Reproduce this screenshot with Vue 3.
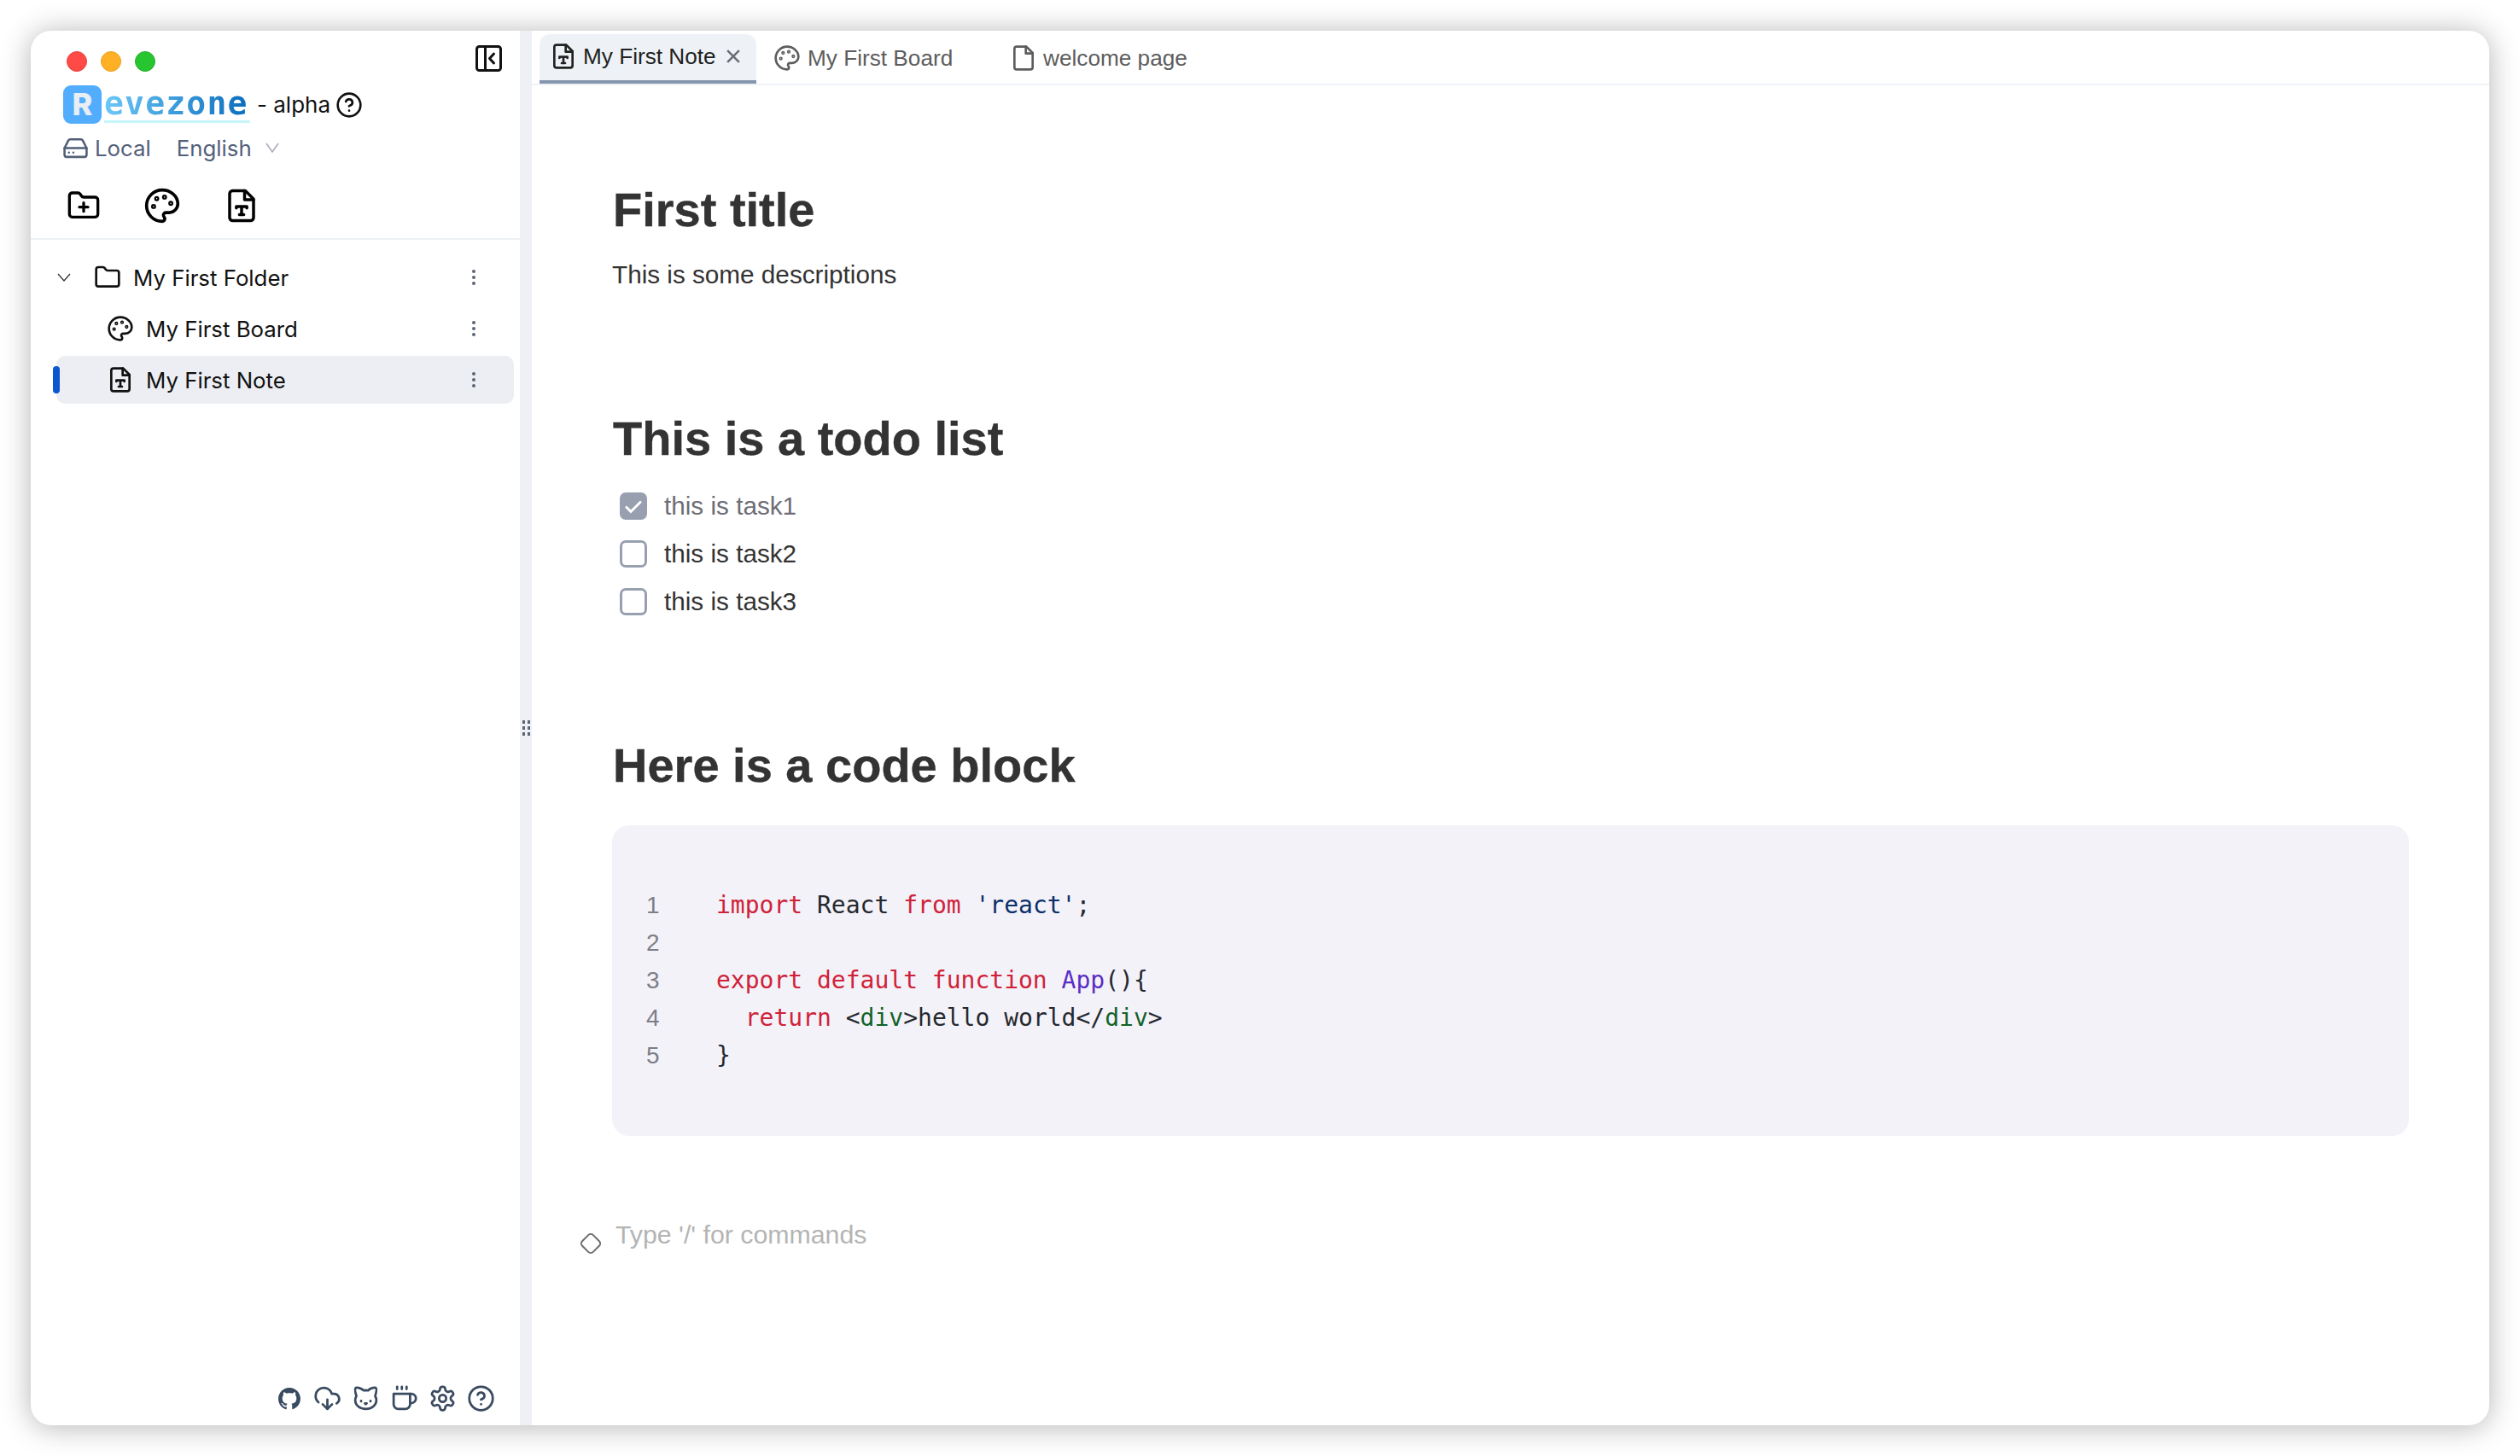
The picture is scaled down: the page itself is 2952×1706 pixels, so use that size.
<script setup>
const tree = [
  { label: 'My First Folder', icon: 'i-folder', kind: 'folder' },
  { label: 'My First Board', icon: 'i-palette', kind: 'item' },
  { label: 'My First Note', icon: 'i-note', kind: 'item active' }
]
const footer = ['i-cloud', 'i-cat', 'i-cup', 'i-gear', 'i-help']
const tasks = [
  { text: 'this is task1', done: true },
  { text: 'this is task2', done: false },
  { text: 'this is task3', done: false }
]
</script>

<template>
  <svg class="defs" aria-hidden="true">
    <defs>
      <symbol id="i-palette" viewBox="0 0 24 24"><circle cx="13.5" cy="6.5" r=".6"/><circle cx="17.5" cy="10.5" r=".6"/><circle cx="8.5" cy="7.5" r=".6"/><circle cx="6.5" cy="12.5" r=".6"/><path d="M12 2C6.5 2 2 6.5 2 12s4.5 10 10 10c.926 0 1.648-.746 1.648-1.688 0-.437-.18-.835-.437-1.125-.29-.289-.438-.652-.438-1.125a1.64 1.64 0 0 1 1.668-1.668h1.996c3.051 0 5.555-2.503 5.555-5.554C21.965 6.012 17.461 2 12 2z"/></symbol>
      <symbol id="i-note" viewBox="0 0 24 24"><path d="M14.5 2H6a2 2 0 0 0-2 2v16a2 2 0 0 0 2 2h12a2 2 0 0 0 2-2V7.5L14.5 2z"/><path d="M14 2v6h6"/><path d="M8.5 13.5v-1h7v1M12 12.5v5.5M10.5 18h3"/></symbol>
      <symbol id="i-file" viewBox="0 0 24 24"><path d="M14.5 2H6a2 2 0 0 0-2 2v16a2 2 0 0 0 2 2h12a2 2 0 0 0 2-2V7.5L14.5 2z"/><path d="M14 2v6h6"/></symbol>
      <symbol id="i-folder" viewBox="0 0 24 24"><path d="M4 20h16a2 2 0 0 0 2-2V8a2 2 0 0 0-2-2h-7.93a2 2 0 0 1-1.66-.9l-.82-1.2A2 2 0 0 0 7.93 3H4a2 2 0 0 0-2 2v13c0 1.1.9 2 2 2Z"/></symbol>
      <symbol id="i-folder-plus" viewBox="0 0 24 24"><path d="M4 20h16a2 2 0 0 0 2-2V8a2 2 0 0 0-2-2h-7.93a2 2 0 0 1-1.66-.9l-.82-1.2A2 2 0 0 0 7.93 3H4a2 2 0 0 0-2 2v13c0 1.1.9 2 2 2Z"/><path d="M12 10v6M9 13h6"/></symbol>
      <symbol id="i-help" viewBox="0 0 24 24"><circle cx="12" cy="12" r="10"/><path d="M9.09 9a3 3 0 0 1 5.83 1c0 2-3 3-3 3"/><path d="M12 17h.01"/></symbol>
      <symbol id="i-cloud" viewBox="0 0 24 24"><path d="M12 13v8l-4-4"/><path d="m12 21 4-4"/><path d="M4.393 15.269A7 7 0 1 1 15.71 8h1.79a4.5 4.5 0 0 1 2.436 8.284"/></symbol>
      <symbol id="i-cat" viewBox="0 0 24 24"><path d="M12 5c.67 0 1.35.09 2 .26 1.78-2 5.03-2.84 6.42-2.26 1.4.58-.42 7-.42 7 .57 1.07 1 2.24 1 3.44C21 17.9 16.97 21 12 21s-9-3-9-7.56c0-1.25.5-2.4 1-3.44 0 0-1.89-6.42-.5-7 1.39-.58 4.72.23 6.5 2.23A9.04 9.04 0 0 1 12 5Z"/><path d="M8 14v.5M16 14v.5M11.25 16.25h1.5L12 17l-.75-.75Z"/></symbol>
      <symbol id="i-cup" viewBox="0 0 24 24"><path d="M17 8h1a4 4 0 1 1 0 8h-1"/><path d="M3 8h14v9a4 4 0 0 1-4 4H7a4 4 0 0 1-4-4Z"/><path d="M6 2v2M10 2v2M14 2v2"/></symbol>
      <symbol id="i-gear" viewBox="0 0 24 24"><path d="M12.22 2h-.44a2 2 0 0 0-2 2v.18a2 2 0 0 1-1 1.73l-.43.25a2 2 0 0 1-2 0l-.15-.08a2 2 0 0 0-2.73.73l-.22.38a2 2 0 0 0 .73 2.73l.15.1a2 2 0 0 1 1 1.72v.51a2 2 0 0 1-1 1.74l-.15.09a2 2 0 0 0-.73 2.73l.22.38a2 2 0 0 0 2.73.73l.15-.08a2 2 0 0 1 2 0l.43.25a2 2 0 0 1 1 1.73V20a2 2 0 0 0 2 2h.44a2 2 0 0 0 2-2v-.18a2 2 0 0 1 1-1.73l.43-.25a2 2 0 0 1 2 0l.15.08a2 2 0 0 0 2.73-.73l.22-.39a2 2 0 0 0-.73-2.73l-.15-.08a2 2 0 0 1-1-1.74v-.5a2 2 0 0 1 1-1.74l.15-.09a2 2 0 0 0 .73-2.73l-.22-.38a2 2 0 0 0-2.73-.73l-.15.08a2 2 0 0 1-2 0l-.43-.25a2 2 0 0 1-1-1.73V4a2 2 0 0 0-2-2z"/><circle cx="12" cy="12" r="3"/></symbol>
      <symbol id="i-drive" viewBox="0 0 24 24"><path d="M22 12H2"/><path d="M5.45 5.11 2 12v6a2 2 0 0 0 2 2h16a2 2 0 0 0 2-2v-6l-3.45-6.89A2 2 0 0 0 16.76 4H7.24a2 2 0 0 0-1.79 1.11z"/><path d="M6 16h.01M10 16h.01"/></symbol>
      <symbol id="i-collapse" viewBox="0 0 31 31"><rect x="1.5" y="1.5" width="28" height="28" rx="3"/><path d="M11.5 1.5v28M21.5 10l-5 5.500 5 5.500"/></symbol>
    </defs>
  </svg>

  <div class="page">
    <div class="window">
      <aside class="sidebar">
        <div class="head">
          <div class="lights-row">
            <div class="lights">
              <span class="light red"></span>
              <span class="light amber"></span>
              <span class="light green"></span>
            </div>
            <svg class="ico collapse"><use href="#i-collapse" /></svg>
          </div>
          <div class="brand">
            <span class="brand-r">R</span>
            <span class="brand-word">evezone</span>
            <span class="brand-alpha">- alpha</span>
            <svg class="ico brand-help"><use href="#i-help" /></svg>
          </div>
          <div class="meta">
            <svg class="ico meta-drive"><use href="#i-drive" /></svg>
            <span class="meta-local">Local</span>
            <span class="meta-lang">English</span>
            <svg class="meta-chev" viewBox="0 0 16 12"><path d="M1 1l7 10 7-10" /></svg>
          </div>
          <div class="tools">
            <svg class="ico tool tool-folder"><use href="#i-folder-plus" /></svg>
            <svg class="ico tool tool-palette"><use href="#i-palette" /></svg>
            <svg class="ico tool tool-note"><use href="#i-note" /></svg>
          </div>
        </div>

        <nav class="tree">
          <div v-for="row in tree" :key="row.label" class="row" :class="row.kind">
            <span v-if="row.kind.includes('active')" class="marker"></span>
            <svg v-if="row.kind === 'folder'" class="row-chev" viewBox="0 0 16 10"><path d="M1 1l7 8 7-8" /></svg>
            <svg class="ico row-icon"><use :href="'#' + row.icon" /></svg>
            <span class="row-label">{{ row.label }}</span>
            <span class="row-more"><i></i><i></i><i></i></span>
          </div>
        </nav>

        <div class="foot">
          <svg class="foot-git" viewBox="0 0 16 16"><path d="M8 0C3.58 0 0 3.58 0 8c0 3.54 2.29 6.53 5.47 7.59.4.07.55-.17.55-.38 0-.19-.01-.82-.01-1.49-2.01.37-2.53-.49-2.69-.94-.09-.23-.48-.94-.82-1.13-.28-.15-.68-.52-.01-.53.63-.01 1.08.58 1.23.82.72 1.21 1.87.87 2.33.66.07-.52.28-.87.51-1.07-1.78-.2-3.64-.89-3.64-3.95 0-.87.31-1.59.82-2.15-.08-.2-.36-1.02.08-2.12 0 0 .67-.21 2.2.82.64-.18 1.32-.27 2-.27.68 0 1.36.09 2 .27 1.53-1.04 2.2-.82 2.2-.82.44 1.1.16 1.92.08 2.12.51.56.82 1.27.82 2.15 0 3.07-1.87 3.75-3.65 3.95.29.25.54.73.54 1.48 0 1.07-.01 1.93-.01 2.2 0 .21.15.46.55.38A8.013 8.013 0 0016 8c0-4.42-3.58-8-8-8z"/></svg>
          <svg v-for="f in footer" :key="f" class="ico foot-icon"><use :href="'#' + f" /></svg>
        </div>
      </aside>

      <div class="gutter">
        <span class="grip"><i></i><i></i><i></i><i></i><i></i><i></i></span>
      </div>

      <main class="main">
        <header class="tabs">
          <div class="tab tab-active">
            <svg class="ico tab-icon"><use href="#i-note" /></svg>
            <span>My First Note</span>
            <svg class="tab-x" viewBox="1 1 14 14"><path d="M2 2l12 12M14 2L2 14" /></svg>
          </div>
          <div class="tab tab-board">
            <svg class="ico tab-icon"><use href="#i-palette" /></svg>
            <span>My First Board</span>
          </div>
          <div class="tab tab-file">
            <svg class="ico tab-icon"><use href="#i-file" /></svg>
            <span>welcome page</span>
          </div>
        </header>

        <article class="doc">
          <h1 class="h-first">First title</h1>
          <p class="desc">This is some descriptions</p>

          <h1 class="h-todo">This is a todo list</h1>
          <ul class="tasks">
            <li v-for="t in tasks" :key="t.text" class="task" :class="{ done: t.done }">
              <span class="box">
                <svg v-if="t.done" viewBox="0 0 32 32"><path d="M7 16.500l6 6L25 10.500" /></svg>
              </span>
              <span>{{ t.text }}</span>
            </li>
          </ul>

          <h1 class="h-code">Here is a code block</h1>
          <div class="code">
            <div class="nums"><span>1</span><span>2</span><span>3</span><span>4</span><span>5</span></div>
            <div class="lines">
              <div><b class="kw">import</b> React <b class="kw">from</b> <b class="str">'react'</b>;</div>
              <div>&nbsp;</div>
              <div><b class="kw">export default function</b> <b class="fn">App</b>(){</div>
              <div>&nbsp;&nbsp;<b class="kw">return</b> &lt;<b class="tag">div</b>&gt;hello world&lt;/<b class="tag">div</b>&gt;</div>
              <div>}</div>
            </div>
          </div>

          <div class="placeholder">
            <span class="diamond"></span>
            <span>Type '/' for commands</span>
          </div>
        </article>
      </main>
    </div>
  </div>
</template>

<style>
html, body { margin: 0; background: #fff; overflow: hidden; }
</style>

<style scoped>
.defs { position: absolute; width: 0; height: 0; }
.page { width: 2952px; height: 1706px; padding: 36px; box-sizing: border-box; background: #fff; overflow: hidden; }
.window {
  display: flex; width: 2880px; height: 1634px; background: #fff; border-radius: 24px; overflow: hidden;
  box-shadow: 0 2px 34px rgba(0, 0, 0, .3);
  font-family: "Liberation Sans", Arial, sans-serif;
}
.ico { fill: none; stroke: currentColor; stroke-width: 2; stroke-linecap: round; stroke-linejoin: round; }

.sidebar { width: 573px; flex: none; display: flex; flex-direction: column; font-family: Inter, "Liberation Sans", sans-serif; color: #111; }
.head { border-bottom: 2px solid #eef1f5; height: 245px; box-sizing: border-box; padding-left: 38px; }
.lights-row { display: flex; justify-content: space-between; height: 64px; padding: 17px 21px 0 4px; box-sizing: border-box; }
.lights { display: flex; gap: 16px; padding-top: 7px; }
.light { width: 24px; height: 24px; border-radius: 50%; box-sizing: border-box; }
.red { background: #ff4a46; border: 1px solid #e8403c; }
.amber { background: #ffb024; border: 1px solid #e89e1e; }
.green { background: #27c52f; border: 1px solid #24b02b; }
.collapse { width: 31px; height: 31px; color: #111; stroke-width: 3; }
.brand { display: flex; align-items: center; height: 45px; }
.brand-r {
  width: 45px; height: 45px; border-radius: 9px; background: #52adff; color: #e9eef3;
  font: 800 36px/45px Inter, sans-serif; text-align: center;
}
.brand-word {
  margin-left: 3px; width: 171px; height: 42px; box-sizing: border-box; border-bottom: 3px solid #c6f6fb;
  font: 700 38px/38px "DejaVu Sans Mono", monospace; letter-spacing: 1.200px;
  background: linear-gradient(90deg, #6cc8f8, #0a6cbd); -webkit-background-clip: text; background-clip: text; color: transparent;
}
.brand-alpha { margin-left: 8px; font-size: 26px; color: #111; }
.brand-help { width: 32px; height: 32px; margin-left: 6px; }
.meta { display: flex; align-items: center; height: 36px; margin-top: 10px; font-size: 25.800px; color: #53607a; }
.meta-drive { width: 31px; height: 31px; margin-left: -1px; flex: none; }
.meta-local { margin-left: 7px; }
.meta-lang { margin-left: 30px; }
.meta-chev { width: 16px; height: 12px; margin-left: 16px; fill: none; stroke: #a6abb3; stroke-width: 1.500; }
.tools { display: flex; align-items: center; margin-top: 28px; color: #000; }
.tool { height: 44px; }
.tool-folder { width: 40px; margin-left: 4px; }
.tool-palette { width: 44px; margin-left: 50px; }
.tool-note { width: 42px; margin-left: 50px; }

.tree { display: flex; flex-direction: column; gap: 4px; padding: 16px 7px 0 30px; }
.row { position: relative; display: flex; align-items: center; height: 56px; font-size: 25.800px; border-radius: 10px; color: #111; }
.row.active { background: #eceef3; }
.marker { position: absolute; left: -4px; top: 12px; width: 8px; height: 32px; border-radius: 4px; background: #0b57d0; }
.row-chev { width: 16px; height: 10px; margin-left: 1px; fill: none; stroke: #333; stroke-width: 1.300; }
.row-icon { width: 32px; height: 32px; flex: none; }
.folder .row-icon { margin-left: 27px; }
.item .row-icon, .active .row-icon { margin-left: 59px; }
.row-label { margin-left: 14px; }
.row-more { display: flex; flex-direction: column; gap: 3px; margin-left: auto; margin-right: 45px; }
.row-more i { width: 4px; height: 4px; border-radius: 50%; background: #5c6577; }

.foot { margin-top: auto; display: flex; justify-content: flex-end; align-items: center; gap: 12px; padding: 0 29px 15px 0; color: #3a4a60; }
.foot-git { width: 26px; height: 26px; fill: #3a4a60; margin-right: 3px; }
.foot-icon { width: 33px; height: 33px; }

.gutter { width: 14px; flex: none; background: #eef0f5; display: flex; align-items: center; justify-content: center; }
.grip { display: grid; grid-template-columns: 3px 3px; gap: 3px; }
.grip i { width: 3px; height: 4px; background: #5b6575; }

.main { flex: 1; min-width: 0; display: flex; flex-direction: column; }
.tabs { display: flex; height: 64px; box-sizing: border-box; padding: 4px 0 0 9px; border-bottom: 2px solid #eef2f6; }
.tab { display: flex; align-items: center; height: 58px; box-sizing: border-box; padding-bottom: 2px; font-size: 26.200px; color: #5d5d5d; }
.tab-icon { width: 32px; height: 32px; flex: none; }
.tab-active { width: 254px; padding-left: 12px; padding-bottom: 2px; background: #eef2f6; border-radius: 12px 12px 0 0; border-bottom: 4px solid #8496ad; color: #222; }
.tab-active span { margin-left: 7px; }
.tab-x { width: 16px; height: 16px; margin-left: 12px; fill: none; stroke: #6b6f75; stroke-width: 2.200; }
.tab-board { width: 280px; padding-left: 20px; }
.tab-board span { margin-left: 8px; }
.tab-file { padding-left: 17px; }
.tab-file span { margin-left: 7px; }

.doc { padding: 0 94px; color: #333; }
.doc h1 { margin: 0; padding-left: 1px; font-size: 56px; line-height: 68px; font-weight: 700; color: #333; -webkit-text-stroke: .4px #333; }
.doc .h-first { padding-top: 112px; }
.desc { margin: 20px 0 0; font-size: 29.700px; line-height: 44px; color: #333; }
.doc .h-todo { margin-top: 136px; }
.tasks { list-style: none; margin: 17px 0 0; padding: 0; }
.task { display: flex; align-items: center; gap: 20px; height: 56px; font-size: 29.700px; padding-left: 9px; }
.task.done { color: #6e6e76; }
.box { width: 32px; height: 32px; box-sizing: border-box; border: 3px solid #98a0b0; border-radius: 7px; flex: none; display: block; }
.done .box { background: #98a0b0; position: relative; }
.done .box svg { position: absolute; inset: -3px; width: 32px; height: 32px; fill: none; stroke: #fff; stroke-width: 2.800; }
.doc .h-code { margin-top: 130px; }
.code { display: flex; margin-top: 36px; height: 364px; box-sizing: border-box; padding: 72px 40px; background: #f4f2f9; border-radius: 20px; }
.nums { width: 82px; flex: none; display: flex; flex-direction: column; font-size: 28px; line-height: 44px; color: #7c7f88; }
.lines { font: 28px/44px "DejaVu Sans Mono", monospace; color: #24292f; white-space: pre; }
.lines b { font-weight: 400; }
.kw { color: #cf2239; }
.str { color: #0a3069; }
.fn { color: #5a2dc4; }
.tag { color: #116329; }
.placeholder { position: relative; margin-top: 94px; padding-left: 4px; font-size: 30.300px; line-height: 44px; color: #b4b4b4; }
.diamond { position: absolute; left: -35px; top: 22px; width: 20px; height: 20px; box-sizing: border-box; border: 2px solid #6d6d6d; border-radius: 5px; transform: rotate(45deg); }
</style>
